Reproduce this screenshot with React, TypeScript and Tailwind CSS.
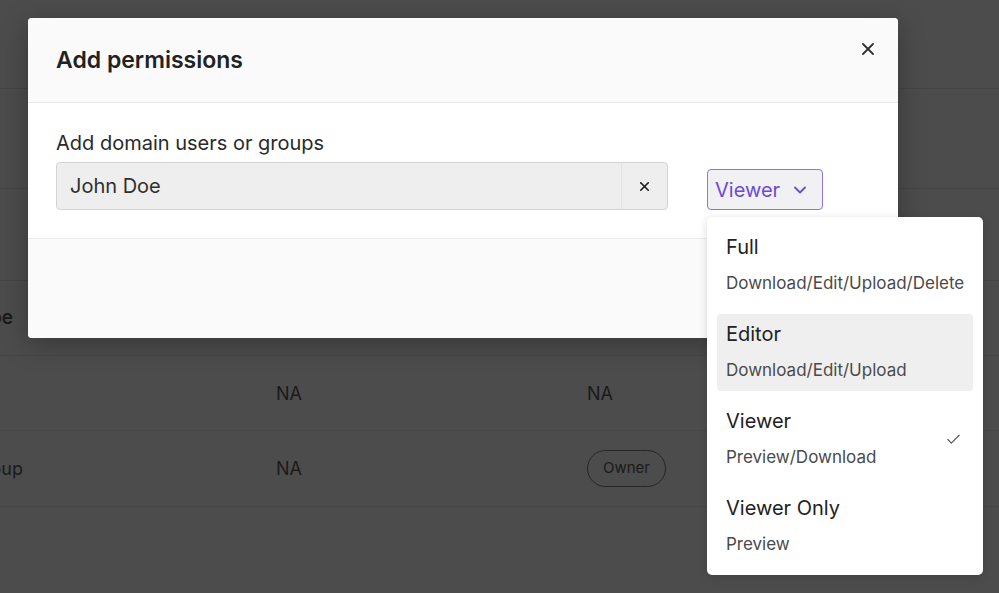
import { X, ChevronDown, Check } from 'lucide-react';

export default function App() {
  const options = [
    { title: 'Full', description: 'Download/Edit/Upload/Delete', active: false, selected: false },
    { title: 'Editor', description: 'Download/Edit/Upload', active: true, selected: false },
    { title: 'Viewer', description: 'Preview/Download', active: false, selected: true },
    { title: 'Viewer Only', description: 'Preview', active: false, selected: false },
  ];

  return (
    <div className="relative h-[593px] w-[999px] overflow-hidden bg-[#4c4c4d] font-['Inter',sans-serif]">
      {/* Dimmed page behind the dialog */}
      <div className="flex flex-col">
        <div className="h-[89px] border-b border-[#454546]" />
        <div className="h-[100px] border-b border-[#454546]" />
        <div className="h-[92px] border-b border-[#454546]" />
        <div className="flex h-[75px] items-center border-b border-[#464646] text-[19px] text-[#1a1a1a]">
          <div className="flex w-[13px] justify-end overflow-hidden whitespace-nowrap font-semibold">Type</div>
        </div>
        <div className="flex h-[75px] items-center border-b border-[#464646] text-[18px] text-[#1a1a1a]">
          <div className="w-[276px]" />
          <div className="w-[311px]">NA</div>
          <div>NA</div>
        </div>
        <div className="flex h-[76px] items-center border-b border-[#464646] text-[18px] text-[#1a1a1a]">
          <div className="flex w-[276px]">
            <div className="flex w-[23px] justify-end overflow-hidden whitespace-nowrap">Group</div>
          </div>
          <div className="w-[311px]">NA</div>
          <div className="flex h-[37px] w-[79px] items-center justify-center rounded-full border-[1.5px] border-[#262626] text-[15px]">
            Owner
          </div>
        </div>
      </div>

      {/* Dialog */}
      <div className="absolute left-[28px] top-[18px] w-[870px] overflow-hidden rounded-[4px] bg-white shadow-[0_6px_28px_rgba(0,0,0,0.28)]">
        <div className="flex h-[85px] items-center justify-between border-b border-[#e9e9e9] bg-[#fafafa] pl-[28px] pr-[20px]">
          <h2 className="text-[23px] font-semibold text-[#222]">Add permissions</h2>
          <X className="mb-[22px] h-[20px] w-[20px] text-[#333]" strokeWidth={2.2} />
        </div>
        <div className="px-[28px] py-[28px]">
          <label className="mb-[7px] block text-[20px] leading-[24px] text-[#2a2a2a]">Add domain users or groups</label>
          <div className="flex items-end gap-[39px]">
            <div className="flex h-[48px] w-[612px] items-center rounded-[4px] border border-[#d3d3d3] bg-[#eeeeee]">
              <span className="flex-1 pl-[13px] text-[20px] text-[#2f2f2f]">John Doe</span>
              <button className="flex h-full w-[46px] items-center justify-center border-l border-[#e3e3e3]">
                <X className="h-[15px] w-[15px] text-[#1a1a1a]" strokeWidth={2.6} />
              </button>
            </div>
            <button className="flex h-[41px] w-[116px] items-center gap-[10px] rounded-[4px] border-[1.5px] border-[#8e74e4] bg-[#f1f0f3] pl-[7px] text-[20px] text-[#6a4bd2]">
              <span>Viewer</span>
              <ChevronDown className="h-[20px] w-[20px]" strokeWidth={2.2} />
            </button>
          </div>
        </div>
        <div className="h-[100px] border-t border-[#ececec] bg-[#fafafa]" />
      </div>

      {/* Role menu */}
      <div className="absolute left-[707px] top-[217px] flex w-[276px] flex-col gap-[10px] rounded-[5px] bg-white p-[10px] shadow-[0_2px_10px_rgba(0,0,0,0.15)]">
        {options.map((option, index) => (
          <div
            key={index}
            className={`flex h-[77px] items-center justify-between rounded-[4px] pl-[9px] pr-[11px] ${option.active ? 'bg-[#efefef]' : ''}`}
          >
            <div className="flex flex-col pb-[2px]">
              <span className="text-[20px] leading-[24px] text-[#222]">{option.title}</span>
              <span className="mt-[13px] whitespace-nowrap text-[17px] leading-[22px] text-[#4a4a4a]">{option.description}</span>
            </div>
            {option.selected && <Check className="h-[17px] w-[17px] text-[#555]" strokeWidth={1.6} />}
          </div>
        ))}
      </div>
    </div>
  );
}
